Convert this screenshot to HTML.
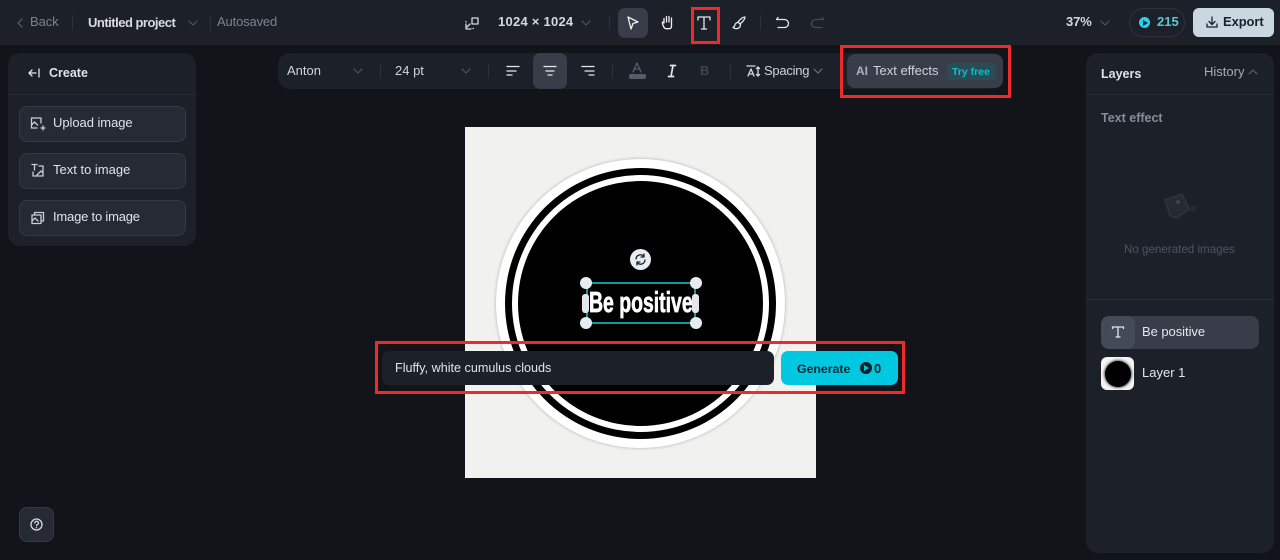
<!DOCTYPE html>
<html><head><meta charset="utf-8"><style>
*{box-sizing:border-box;margin:0;padding:0}
html,body{width:1280px;height:560px;overflow:hidden;background:#12141a}
body{position:relative;font-family:"Liberation Sans",sans-serif;font-size:13px;color:#e4e8ee}
.a{position:absolute}
.t{position:absolute;white-space:nowrap;line-height:16px}
.s{position:absolute;overflow:visible}
.s *{fill:none;stroke:currentColor;stroke-width:1.3;stroke-linecap:round;stroke-linejoin:round}
.panel{position:absolute;background:#1c2029;border-radius:12px}
.btn{position:absolute;left:19px;width:167px;height:36px;background:#262a34;border:1px solid #343945;border-radius:8px}
.red{position:absolute;border:3px solid #ee2a2a}
.h{position:absolute;width:12px;height:12px;border-radius:50%;background:#e6eef3}
.c *{stroke-width:1.1}
</style></head><body>
<div class="a" style="left:0;top:0;width:1280px;height:45px;background:#1c2029"></div>
<svg class="s c" style="left:15px;top:17px;color:#5d636e" width="10" height="12"><path d="M7 2L3 6l4 4"/></svg>
<div class="t" style="left:30px;top:14px;color:#7d838e;letter-spacing:-.1px">Back</div>
<div class="a" style="left:72px;top:15px;width:1px;height:15px;background:#2c313b"></div>
<div class="t" style="left:88px;top:15px;font-weight:700;letter-spacing:-.5px;color:#d8dce2">Untitled project</div>
<svg class="s c" style="left:187px;top:18px;color:#4f5561" width="12" height="10"><path d="M2 3l4 4 4-4"/></svg>
<div class="a" style="left:210px;top:15px;width:1px;height:15px;background:#2c313b"></div>
<div class="t" style="left:217px;top:14px;color:#7d838e;letter-spacing:-.15px">Autosaved</div>

<svg class="s" style="left:464px;top:15px;color:#d5d9df" width="16" height="16"><path d="M8 3h6v6H8z"/><path d="M2 9v5h5M3 12l3-3M2 7v-.5M9 13.500h.5"/></svg>
<div class="t" style="left:498px;top:14px;font-weight:700;color:#d5d9df;letter-spacing:.25px">1024 × 1024</div>
<svg class="s c" style="left:580px;top:18px;color:#4f5561" width="12" height="10"><path d="M2 3l4 4 4-4"/></svg>
<div class="a" style="left:609px;top:15px;width:1px;height:15px;background:#2c313b"></div>
<div class="a" style="left:618px;top:8px;width:30px;height:30px;border-radius:7px;background:#383d49"></div>
<svg class="s" style="left:625px;top:15px;color:#eef1f4" width="16" height="16"><path d="M3 2l10 5-5 1.500L6 14z"/></svg>
<svg class="s" style="left:660px;top:14px;color:#eef1f4" width="16" height="17"><path d="M4 9V4.500M6.500 8V2.500M9 8V2.500M11.500 9V4M4 9L2.500 8C2 9 3 12 4.500 14c1 1 5.500 1 6.500 0 .5-1 .6-3 .5-5"/></svg>
<svg class="s" style="left:696px;top:15px;color:#e4e8ee" width="16" height="16"><path d="M2 5V2h12v3M8 2v12M5.500 14h5"/></svg>
<svg class="s" style="left:731px;top:15px;color:#e4e8ee" width="16" height="16"><path d="M14 2c-2 0-5 2.500-7 5l2 2c2.500-2 5-5 5-7zM6.500 7.500C3 8 5 11 2 12.500c2.500 2 7.500 1.500 7.500-3"/></svg>
<div class="a" style="left:760px;top:15px;width:1px;height:15px;background:#2c313b"></div>
<svg class="s" style="left:775px;top:15px;color:#e4e8ee" width="16" height="16"><path d="M3 2.500L1.500 4.500h8a4 4 0 0 1 0 8H3"/></svg>
<svg class="s" style="left:809px;top:15px;color:#454a55" width="16" height="16"><path d="M13 2.500l1.500 2h-8a4 4 0 0 0 0 8H13"/></svg>

<div class="t" style="left:1066px;top:14px;font-weight:700;color:#d5d9df;letter-spacing:-.1px">37%</div>
<svg class="s c" style="left:1099px;top:18px;color:#4f5561" width="12" height="10"><path d="M2 3l4 4 4-4"/></svg>
<div class="a" style="left:1129px;top:8px;width:56px;height:29px;border:1px solid #2d323d;border-radius:15px"></div>
<div class="a" style="left:1139px;top:17px;width:11px;height:11px;border-radius:50%;background:#2fd0ef"></div>
<div class="a" style="left:1143px;top:20px;border-left:5px solid #12303c;border-top:3px solid transparent;border-bottom:3px solid transparent"></div>
<div class="t" style="left:1157px;top:14px;font-weight:700;color:#5fc6d8">215</div>
<div class="a" style="left:1193px;top:8px;width:81px;height:29px;background:#c9d8e0;border-radius:6px"></div>
<svg class="s" style="left:1205px;top:15px;color:#1c2029" width="14" height="14"><path d="M7 2v7M4 6.500L7 9.500l3-3M2 9v3h10V9"/></svg>
<div class="t" style="left:1223px;top:14px;font-weight:700;color:#1c2029;letter-spacing:-.1px">Export</div>

<div class="panel" style="left:8px;top:53px;width:188px;height:193px"></div>
<div class="a" style="left:8px;top:94px;width:188px;height:1px;background:#272b35"></div>
<svg class="s" style="left:27px;top:66px;color:#e4e8ee" width="14" height="14"><path d="M9 7H2M5 4L2 7l3 3M12 3v8"/></svg>
<div class="t" style="left:49px;top:65px;font-weight:700;color:#dfe4ea;font-size:12.500px">Create</div>
<div class="btn" style="top:106px"></div>
<div class="btn" style="top:153px"></div>
<div class="btn" style="top:200px"></div>
<svg class="s" style="left:30px;top:116px;color:#c9ced6" width="15" height="15"><path d="M11 7V2H1.500v10H7M1.500 9l3-3 3 3M13 10v4M11 12h4"/></svg>
<svg class="s" style="left:30px;top:163px;color:#c9ced6" width="15" height="15"><path d="M2 1.500h5M4.500 1.500V7M9 3h4v10H3V9M7 12l4-4 2 2"/></svg>
<svg class="s" style="left:30px;top:210px;color:#c9ced6" width="15" height="15"><path d="M2 5h9v8.500H2zM4.500 5V2.500H13.500V11H11M2 11l3-3 3 3"/></svg>
<div class="t" style="left:53px;top:115px;color:#dfe4ea;letter-spacing:-.05px">Upload image</div>
<div class="t" style="left:53px;top:162px;color:#dfe4ea">Text to image</div>
<div class="t" style="left:53px;top:209px;color:#dfe4ea;letter-spacing:-.2px">Image to image</div>

<div class="a" style="left:19px;top:507px;width:35px;height:35px;background:#262a34;border:1px solid #343945;border-radius:8px"></div>
<svg class="s" style="left:29px;top:517px;color:#d5d9df" width="15" height="15"><circle cx="7.500" cy="7.500" r="5.500"/><path d="M5.800 6a1.800 1.800 0 1 1 2.500 1.700c-.6.300-.8.600-.8 1.100M7.500 10.600v.1"/></svg>

<div class="panel" style="left:278px;top:53px;width:725px;height:36px"></div>
<div class="t" style="left:287px;top:63px;color:#cfd4db">Anton</div>
<svg class="s c" style="left:352px;top:66px;color:#4f5561" width="12" height="10"><path d="M2 3l4 4 4-4"/></svg>
<div class="a" style="left:380px;top:64px;width:1px;height:14px;background:#2c313b"></div>
<div class="t" style="left:395px;top:63px;color:#cfd4db">24 pt</div>
<svg class="s c" style="left:460px;top:66px;color:#4f5561" width="12" height="10"><path d="M2 3l4 4 4-4"/></svg>
<div class="a" style="left:488px;top:64px;width:1px;height:14px;background:#2c313b"></div>
<svg class="s" style="left:505px;top:63px;color:#e4e8ee" width="16" height="16"><path d="M2 3.500h12M2 8h9M2 12h5"/></svg>
<div class="a" style="left:533px;top:53px;width:34px;height:36px;border-radius:7px;background:#383d49"></div>
<svg class="s" style="left:542px;top:63px;color:#e4e8ee" width="16" height="16"><path d="M2 3.500h12M4 8h8M6 12h4"/></svg>
<svg class="s" style="left:580px;top:63px;color:#e4e8ee" width="16" height="16"><path d="M2 3.500h12M5 8h9M9 12h5"/></svg>
<div class="a" style="left:612px;top:64px;width:1px;height:14px;background:#2c313b"></div>
<svg class="s" style="left:629px;top:62px;color:#565c68" width="16" height="12"><path d="M4 10L8 1l4 9M5.500 7h5"/></svg>
<div class="a" style="left:629px;top:74px;width:17px;height:5px;border-radius:2px;background:#565c68"></div>
<svg class="s" style="left:664px;top:63px;color:#e4e8ee" width="16" height="16"><path d="M6.500 2.500h5M4.500 13.500h5M9 2.500L7 13.500" style="stroke-width:1.700"/></svg>
<div class="t" style="left:700px;top:63px;color:#3f444f;font-weight:700">B</div>
<div class="a" style="left:730px;top:64px;width:1px;height:14px;background:#2c313b"></div>
<svg class="s" style="left:746px;top:64px;color:#d5d9df" width="16" height="15"><path d="M1 2h8M2 12l3-7 3 7M3 10h4M12 3v9M10.500 4.500L12 3l1.500 1.500M10.500 10.500L12 12l1.500-1.500"/></svg>
<div class="t" style="left:764px;top:63px;color:#cfd4db;letter-spacing:-.25px">Spacing</div>
<svg class="s c" style="left:812px;top:66px;color:#6e7480" width="12" height="10"><path d="M2 3l4 4 4-4"/></svg>
<div class="a" style="left:847px;top:54px;width:156px;height:34px;border-radius:8px;background:#383d49"></div>
<div class="t" style="left:856px;top:63px;color:#aeb3bb;font-weight:700;font-size:12px">AI</div>
<div class="t" style="left:873px;top:63px;color:#cfd4db">Text effects</div>
<div class="a" style="left:947px;top:63px;width:49px;height:17px;border-radius:4px;background:#2a4c55"></div>
<div class="t" style="left:952px;top:64px;color:#10bdd0;font-weight:700;font-size:10.500px">Try free</div>

<div class="panel" style="left:1086px;top:53px;width:188px;height:500px"></div>
<div class="a" style="left:1086px;top:94px;width:188px;height:1px;background:#272b35"></div>
<div class="t" style="left:1101px;top:66px;font-weight:700;color:#dfe4ea;font-size:12.500px">Layers</div>
<div class="t" style="left:1204px;top:64px;color:#a5abb5">History</div>
<svg class="s c" style="left:1247px;top:67px;color:#5d636e" width="12" height="10"><path d="M2 7l4-4 4 4"/></svg>
<div class="t" style="left:1101px;top:110px;color:#878d98;font-weight:700;font-size:12.500px">Text effect</div>
<svg class="s" style="left:1162px;top:191px" width="40" height="34"><path d="M3 9L20 3l7 15-12 9-7-2z" style="fill:#252a33;stroke:#2e343e;stroke-width:1.500"/><path d="M28 16l7-2-2 6-5 1z" style="fill:#252a33;stroke:none"/><circle cx="16" cy="11" r="2" style="fill:#3d4853;stroke:none"/></svg>
<div class="t" style="left:1124px;top:242px;color:#4f5561;font-size:11.600px">No generated images</div>
<div class="a" style="left:1086px;top:299px;width:188px;height:1px;background:#272b35"></div>
<div class="a" style="left:1101px;top:316px;width:158px;height:33px;background:#383d49;border-radius:8px"></div>
<div class="a" style="left:1101px;top:316px;width:34px;height:33px;background:#444a56;border-radius:8px"></div>
<svg class="s" style="left:1110px;top:324px;color:#e4e8ee" width="16" height="16"><path d="M2.500 4.500V3h11v1.500M8 3v10M6 13h4"/></svg>
<div class="t" style="left:1142px;top:324px;color:#e4e8ee;letter-spacing:-.05px">Be positive</div>
<div class="a" style="left:1101px;top:357px;width:33px;height:33px;background:#f4f4f2;border-radius:6px"></div>
<div class="a" style="left:1105px;top:361px;width:26px;height:26px;background:#000;box-shadow:0 0 2px 1px #555;border-radius:50%"></div>
<div class="t" style="left:1142px;top:365px;color:#e4e8ee">Layer 1</div>

<div class="a" style="left:465px;top:127px;width:351px;height:351px;background:#f1f1ef"></div>
<div class="a" style="left:496px;top:159px;width:289px;height:289px;border-radius:50%;background:#fff;box-shadow:0 0 3px #aaa"></div>
<div class="a" style="left:505px;top:168px;width:271px;height:271px;border-radius:50%;background:#000"></div>
<div class="a" style="left:512px;top:175px;width:257px;height:257px;border-radius:50%;background:#fff"></div>
<div class="a" style="left:518px;top:181px;width:245px;height:245px;border-radius:50%;background:#000"></div>

<div class="a" style="left:630px;top:249px;width:21px;height:21px;border-radius:50%;background:#e6eef3"></div>
<svg class="s" style="left:633px;top:252px;color:#1c2029" width="15" height="15"><path d="M3 7a4.500 4.500 0 0 1 8-2.500M12 8a4.500 4.500 0 0 1-8 2.500M11 2v3H8M4 13v-3h3"/></svg>
<div class="a" style="left:586px;top:282px;width:110px;height:42px;border:2px solid #119c9c"></div>
<div class="t" style="left:589px;top:288px;height:30px;line-height:30px;color:#fff;font-weight:700;font-size:29px;-webkit-text-stroke:.7px #fff;transform:scaleX(.67);transform-origin:left center">Be positive</div>
<div class="h" style="left:580px;top:277px"></div><div class="h" style="left:690px;top:277px"></div>
<div class="h" style="left:580px;top:317px"></div><div class="h" style="left:690px;top:317px"></div>
<div class="a" style="left:582px;top:294px;width:7px;height:19px;border-radius:3px;background:#e6e6e6"></div>
<div class="a" style="left:692px;top:294px;width:7px;height:19px;border-radius:3px;background:#e6e6e6"></div>

<div class="a" style="left:382px;top:351px;width:392px;height:34px;background:#1c2029;border-radius:7px"></div>
<div class="t" style="left:395px;top:360px;color:#dfe4ea;font-size:12.600px">Fluffy, white cumulus clouds</div>
<div class="a" style="left:781px;top:351px;width:117px;height:34px;background:#00c8e0;border-radius:7px"></div>
<div class="t" style="left:797px;top:361px;color:#17222c;font-weight:700;font-size:12.300px">Generate</div>
<div class="a" style="left:860px;top:362px;width:12px;height:12px;border-radius:50%;background:#14202a"></div>
<div class="a" style="left:864px;top:365px;border-left:5px solid #00c8e0;border-top:3px solid transparent;border-bottom:3px solid transparent"></div>
<div class="t" style="left:874px;top:361px;color:#17222c;font-weight:700">0</div>

<div class="red" style="left:691px;top:7px;width:29px;height:37px"></div>
<div class="red" style="left:840px;top:45px;width:171px;height:53px"></div>
<div class="red" style="left:375px;top:341px;width:530px;height:53px"></div>
</body></html>
